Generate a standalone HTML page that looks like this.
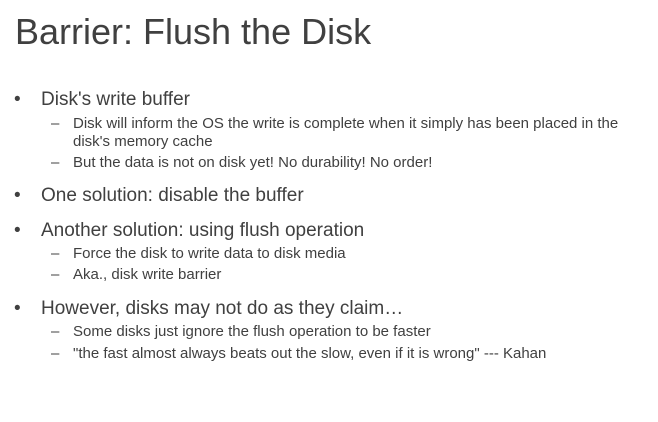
<!DOCTYPE html>
<html><head><style>
body{margin:0;width:658px;height:422px;background:#fff;font-family:"Liberation Sans",Arial,sans-serif;color:#404040;position:relative;overflow:hidden}
div{position:absolute;white-space:nowrap}
.t{left:15px;top:11px;font-size:36px}
.l1{font-size:19px;left:41px}
.b{font-size:19px;left:14px}
.l2{font-size:15px;left:73px}
.d{font-size:15px;left:51px}
</style></head><body>
<div class="t">Barrier: Flush the Disk</div>
<div class="b" style="top:89px">•</div><div class="l1" style="top:89px">Disk's write buffer</div>
<div class="d" style="top:115px">–</div><div class="l2" style="top:115px">Disk will inform the OS the write is complete when it simply has been placed in the</div>
<div class="l2" style="top:133px">disk's memory cache</div>
<div class="d" style="top:154px">–</div><div class="l2" style="top:154px">But the data is not on disk yet! No durability! No order!</div>
<div class="b" style="top:185px">•</div><div class="l1" style="top:185px">One solution: disable the buffer</div>
<div class="b" style="top:220px">•</div><div class="l1" style="top:220px">Another solution: using flush operation</div>
<div class="d" style="top:245px">–</div><div class="l2" style="top:245px">Force the disk to write data to disk media</div>
<div class="d" style="top:266px">–</div><div class="l2" style="top:266px">Aka., disk write barrier</div>
<div class="b" style="top:298px">•</div><div class="l1" style="top:298px">However, disks may not do as they claim…</div>
<div class="d" style="top:323px">–</div><div class="l2" style="top:323px">Some disks just ignore the flush operation to be faster</div>
<div class="d" style="top:345px">–</div><div class="l2" style="top:345px">"the fast almost always beats out the slow, even if it is wrong" --- Kahan</div>
</body></html>
